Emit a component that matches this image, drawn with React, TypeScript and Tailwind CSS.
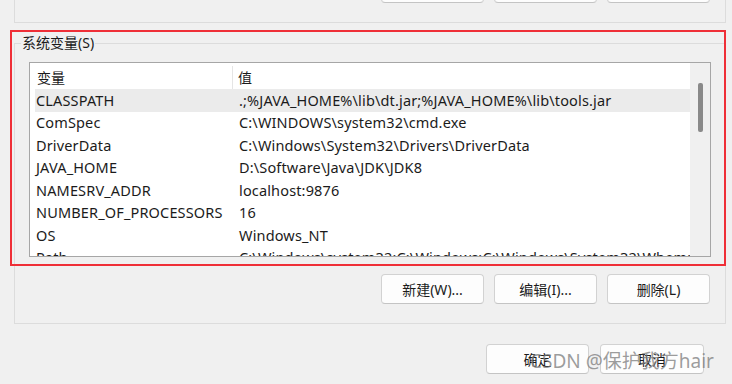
const rows: [string, string][] = [
  ['CLASSPATH', '.;%JAVA_HOME%\\lib\\dt.jar;%JAVA_HOME%\\lib\\tools.jar'],
  ['ComSpec', 'C:\\WINDOWS\\system32\\cmd.exe'],
  ['DriverData', 'C:\\Windows\\System32\\Drivers\\DriverData'],
  ['JAVA_HOME', 'D:\\Software\\Java\\JDK\\JDK8'],
  ['NAMESRV_ADDR', 'localhost:9876'],
  ['NUMBER_OF_PROCESSORS', '16'],
  ['OS', 'Windows_NT'],
  ['Path', 'C:\\Windows\\system32;C:\\Windows;C:\\Windows\\System32\\Wbem;C:\\Windows\\System32\\WindowsPowerShell\\v1.0\\'],
];

const Btn = ({ label, className = '' }: { label?: string; className?: string }) => (
  <button
    className={`h-[30px] w-[103px] shrink-0 rounded-[4px] border border-[#d2d2d2] border-b-[#c4c4c4] bg-[#fdfdfd] text-[14px] text-[#1b1b1b] ${className}`}
  >
    {label}
  </button>
);

export default function App() {
  return (
    <div
      className="relative flex h-[384px] w-[732px] flex-col overflow-hidden bg-[#f0f0f0] pl-[14px] text-[14px] text-[#1b1b1b]"
      style={{ fontFamily: '"Noto Sans", "Noto Sans CJK SC", sans-serif' }}
    >
      {/* 上方用户变量区域的底部，按钮只露出下边缘 */}
      <div className="h-[23px] w-[712px] border-x border-b border-[#dcdcdc]">
        <div className="-mt-[27px] flex justify-end gap-[10px] pr-[15px]">
          <Btn />
          <Btn />
          <Btn />
        </div>
      </div>

      <fieldset className="mt-[10px] w-[712px] min-w-0 border border-[#dcdcdc] px-[14px] pb-[19px]">
        <legend className="-ml-[8px] px-[1px] leading-[20px]">系统变量(S)</legend>

        <div className="mt-[9px] flex h-[195px] border border-[#a6a6a6] bg-white">
          <div className="min-w-0 flex-1 overflow-hidden text-[14.5px] tracking-[0.15px]">
            <div className="flex h-[26px] items-center pt-[3px] text-[14px] tracking-normal">
              <div className="h-full w-[203px] border-r border-[#e5e5e5] pl-[7px] leading-[23px]">变量</div>
              <div className="pl-[5px]">值</div>
            </div>
            {rows.map(([name, value], i) => (
              <div
                key={name}
                className={`ml-[5px] flex h-[22.5px] items-center whitespace-nowrap pt-[1px] ${i === 0 ? 'bg-[#ebebeb]' : ''}`}
              >
                <div className="w-[198px] shrink-0 pl-[1px]">{name}</div>
                <div className="pl-[6px]">{value}</div>
              </div>
            ))}
          </div>
          <div className="w-[20px] shrink-0 bg-[#f0f0f0] pt-[20px] pl-[8px]">
            <div className="h-[49px] w-[5px] rounded-[2px] bg-[#8a8a8a]" />
          </div>
        </div>

        <div className="mt-[17px] flex justify-end gap-[10px] pr-[1px]">
          <Btn label="新建(W)..." />
          <Btn label="编辑(I)..." />
          <Btn label="删除(L)" />
        </div>
      </fieldset>

      <div className="mt-[20px] flex justify-end gap-[11px] pr-[28px]">
        <Btn label="确定" />
        <Btn label="取消" className="w-[104px]" />
      </div>

      {/* 截图标注 */}
      <div className="pointer-events-none absolute left-[10px] top-[30px] h-[236px] w-[716px] border-2 border-[#ef2f37]" />
      <div className="pointer-events-none absolute left-[530px] top-[349px] text-[19px] leading-[24px] text-[#7c7c7c]/75">
        CSDN @保护我方hair
      </div>
    </div>
  );
}
